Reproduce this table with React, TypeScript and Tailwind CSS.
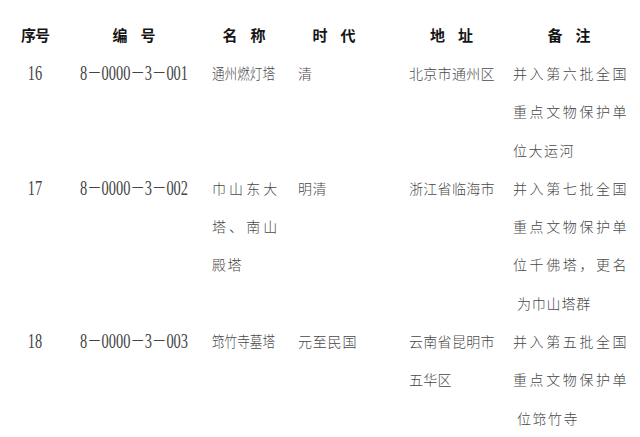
import React from "react";

const cjk = "font-['Noto_Sans_CJK_SC',sans-serif]";

function Head({ a, b, single }: { a: string; b?: string; single?: boolean }) {
  if (single) {
    return (
      <div className="flex justify-center">
        <span className="tracking-[-1px]">{a}</span>
      </div>
    );
  }
  return (
    <div className="flex justify-center">
      <div className="flex w-[43px] justify-between">
        <span>{a}</span>
        <span>{b}</span>
      </div>
    </div>
  );
}

function Num({ t }: { t: string }) {
  return (
    <div className="flex justify-center">
      <span className="inline-block scale-x-[0.72] font-['Liberation_Serif','Noto_Sans_CJK_SC',serif] text-[20px] text-[#444444] whitespace-nowrap">
        {t}
      </span>
    </div>
  );
}

type Line = { t: string; cls?: string };

function Lines({ lines }: { lines: Line[] }) {
  return (
    <div>
      {lines.map((l, i) => (
        <div key={i} className={`whitespace-nowrap ${l.cls ?? ""}`}>
          {l.t}
        </div>
      ))}
    </div>
  );
}

function Condensed({ t }: { t: string }) {
  return (
    <div className="whitespace-nowrap">
      <span className="inline-block origin-left scale-x-[0.84] text-[15px]">{t}</span>
    </div>
  );
}

function Row({
  no,
  code,
  name,
  era,
  addr,
  note,
}: {
  no: string;
  code: string;
  name: React.ReactNode;
  era: Line[];
  addr: Line[];
  note: Line[];
}) {
  return (
    <div className={`grid grid-cols-[70px_128px_88px_114px_105px_135px] leading-[38.3px] text-[14px] font-light text-[#484848] ${cjk}`}>
      <div>
        <Num t={no} />
      </div>
      <div>
        <Num t={code} />
      </div>
      <div className="pl-[14px]">{name}</div>
      <div className="pl-[12px]">
        <Lines lines={era} />
      </div>
      <div className="pl-[9px]">
        <Lines lines={addr} />
      </div>
      <div className="pl-[8px]">
        <Lines lines={note} />
      </div>
    </div>
  );
}

export default function App() {
  return (
    <div className="w-[640px] h-[437px] overflow-hidden bg-white pt-[16px]">
      <div className={`grid grid-cols-[70px_128px_88px_114px_105px_135px] leading-[38px] text-[15px] font-bold text-[#151515] ${cjk}`}>
        <div>
          <Head a="序号" single />
        </div>
        <div>
          <Head a="编" b="号" />
        </div>
        <div className="pl-[14px] pr-[10px]">
          <Head a="名" b="称" />
        </div>
        <div className="pl-[12px] w-[84px]">
          <Head a="时" b="代" />
        </div>
        <div className="pl-[9px] pr-[11px]">
          <Head a="地" b="址" />
        </div>
        <div className="pl-[8px] pr-[15px]">
          <Head a="备" b="注" />
        </div>
      </div>

      <Row
        no="16"
        code="8－0000－3－001"
        name={<Condensed t="通州燃灯塔" />}
        era={[{ t: "清" }]}
        addr={[{ t: "北京市通州区", cls: "tracking-[0.3px]" }]}
        note={[
          { t: "并入第六批全国", cls: "tracking-[2.6px]" },
          { t: "重点文物保护单", cls: "tracking-[2.6px]" },
          { t: "位大运河", cls: "tracking-[1.5px]" },
        ]}
      />
      <Row
        no="17"
        code="8－0000－3－002"
        name={
          <Lines
            lines={[
              { t: "巾山东大", cls: "tracking-[3.1px]" },
              { t: "塔、南山", cls: "tracking-[3.1px]" },
              { t: "殿塔", cls: "tracking-[1.4px]" },
            ]}
          />
        }
        era={[{ t: "明清", cls: "tracking-[0.5px]" }]}
        addr={[{ t: "浙江省临海市", cls: "tracking-[0.3px]" }]}
        note={[
          { t: "并入第七批全国", cls: "tracking-[2.6px]" },
          { t: "重点文物保护单", cls: "tracking-[2.6px]" },
          { t: "位千佛塔，更名", cls: "tracking-[2.6px]" },
          { t: "为巾山塔群", cls: "tracking-[0.8px] pl-[4px]" },
        ]}
      />
      <Row
        no="18"
        code="8－0000－3－003"
        name={<Condensed t="筇竹寺墓塔" />}
        era={[{ t: "元至民国", cls: "tracking-[0.8px]" }]}
        addr={[
          { t: "云南省昆明市", cls: "tracking-[0.3px]" },
          { t: "五华区", cls: "tracking-[0.3px]" },
        ]}
        note={[
          { t: "并入第五批全国", cls: "tracking-[2.6px]" },
          { t: "重点文物保护单", cls: "tracking-[2.6px]" },
          { t: "位筇竹寺", cls: "tracking-[1.5px] pl-[4px]" },
        ]}
      />
    </div>
  );
}
